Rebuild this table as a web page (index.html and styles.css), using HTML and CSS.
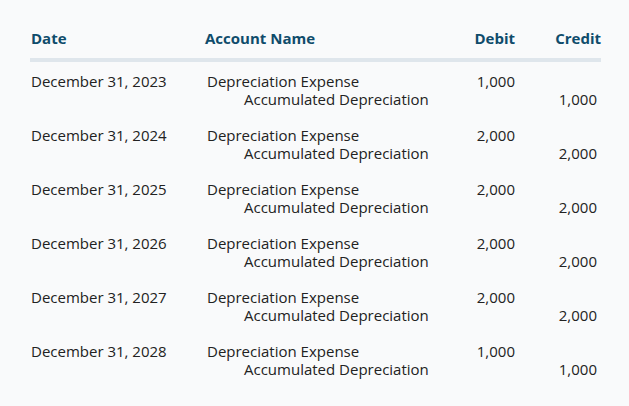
FILE: index.html
```html
<!DOCTYPE html>
<html>
<head>
<meta charset="utf-8">
<link rel="stylesheet" href="styles.css">
</head>
<body>
<div class="page">
  <div class="table">
    <div class="head">
      <div class="h-date">Date</div>
      <div class="h-acct">Account Name</div>
      <div class="h-debit">Debit</div>
      <div class="h-credit">Credit</div>
    </div>
    <div class="rows">
      <div class="row">
        <div class="date">December 31, 2023</div>
        <div class="acct"><div>Depreciation Expense</div><div class="indent">Accumulated Depreciation</div></div>
        <div class="debit">1,000</div>
        <div class="credit"><div>&nbsp;</div><div>1,000</div></div>
      </div>
      <div class="row">
        <div class="date">December 31, 2024</div>
        <div class="acct"><div>Depreciation Expense</div><div class="indent">Accumulated Depreciation</div></div>
        <div class="debit">2,000</div>
        <div class="credit"><div>&nbsp;</div><div>2,000</div></div>
      </div>
      <div class="row">
        <div class="date">December 31, 2025</div>
        <div class="acct"><div>Depreciation Expense</div><div class="indent">Accumulated Depreciation</div></div>
        <div class="debit">2,000</div>
        <div class="credit"><div>&nbsp;</div><div>2,000</div></div>
      </div>
      <div class="row">
        <div class="date">December 31, 2026</div>
        <div class="acct"><div>Depreciation Expense</div><div class="indent">Accumulated Depreciation</div></div>
        <div class="debit">2,000</div>
        <div class="credit"><div>&nbsp;</div><div>2,000</div></div>
      </div>
      <div class="row">
        <div class="date">December 31, 2027</div>
        <div class="acct"><div>Depreciation Expense</div><div class="indent">Accumulated Depreciation</div></div>
        <div class="debit">2,000</div>
        <div class="credit"><div>&nbsp;</div><div>2,000</div></div>
      </div>
      <div class="row">
        <div class="date">December 31, 2028</div>
        <div class="acct"><div>Depreciation Expense</div><div class="indent">Accumulated Depreciation</div></div>
        <div class="debit">1,000</div>
        <div class="credit"><div>&nbsp;</div><div>1,000</div></div>
      </div>
    </div>
  </div>
</div>
</body>
</html>
```
FILE: styles.css
```css
html, body {
  margin: 0;
  padding: 0;
  background: #f9fafb;
}
body {
  font-family: "Open Sans", "Noto Sans", sans-serif;
  color: #222;
  width: 629px;
  height: 406px;
  overflow: hidden;
}
.page {
  padding: 27px 28px 0 30px;
}
.head {
  display: grid;
  grid-template-columns: 174px 1fr 90px 86px;
  font-weight: 700;
  font-size: 15px;
  line-height: 22px;
  color: #0f4c6b;
  padding: 0 0 9px 1px;
  border-bottom: 4px solid #dfe6ec;
}
.h-debit, .h-credit {
  text-align: right;
}
.rows {
  padding-top: 10px;
  display: flex;
  flex-direction: column;
  gap: 18px;
}
.row {
  display: grid;
  grid-template-columns: 176px 1fr 82px 82px;
  font-size: 15px;
  line-height: 18px;
  padding: 0 4px 0 1px;
}
.indent {
  padding-left: 37px;
}
.debit, .credit {
  text-align: right;
}
```
